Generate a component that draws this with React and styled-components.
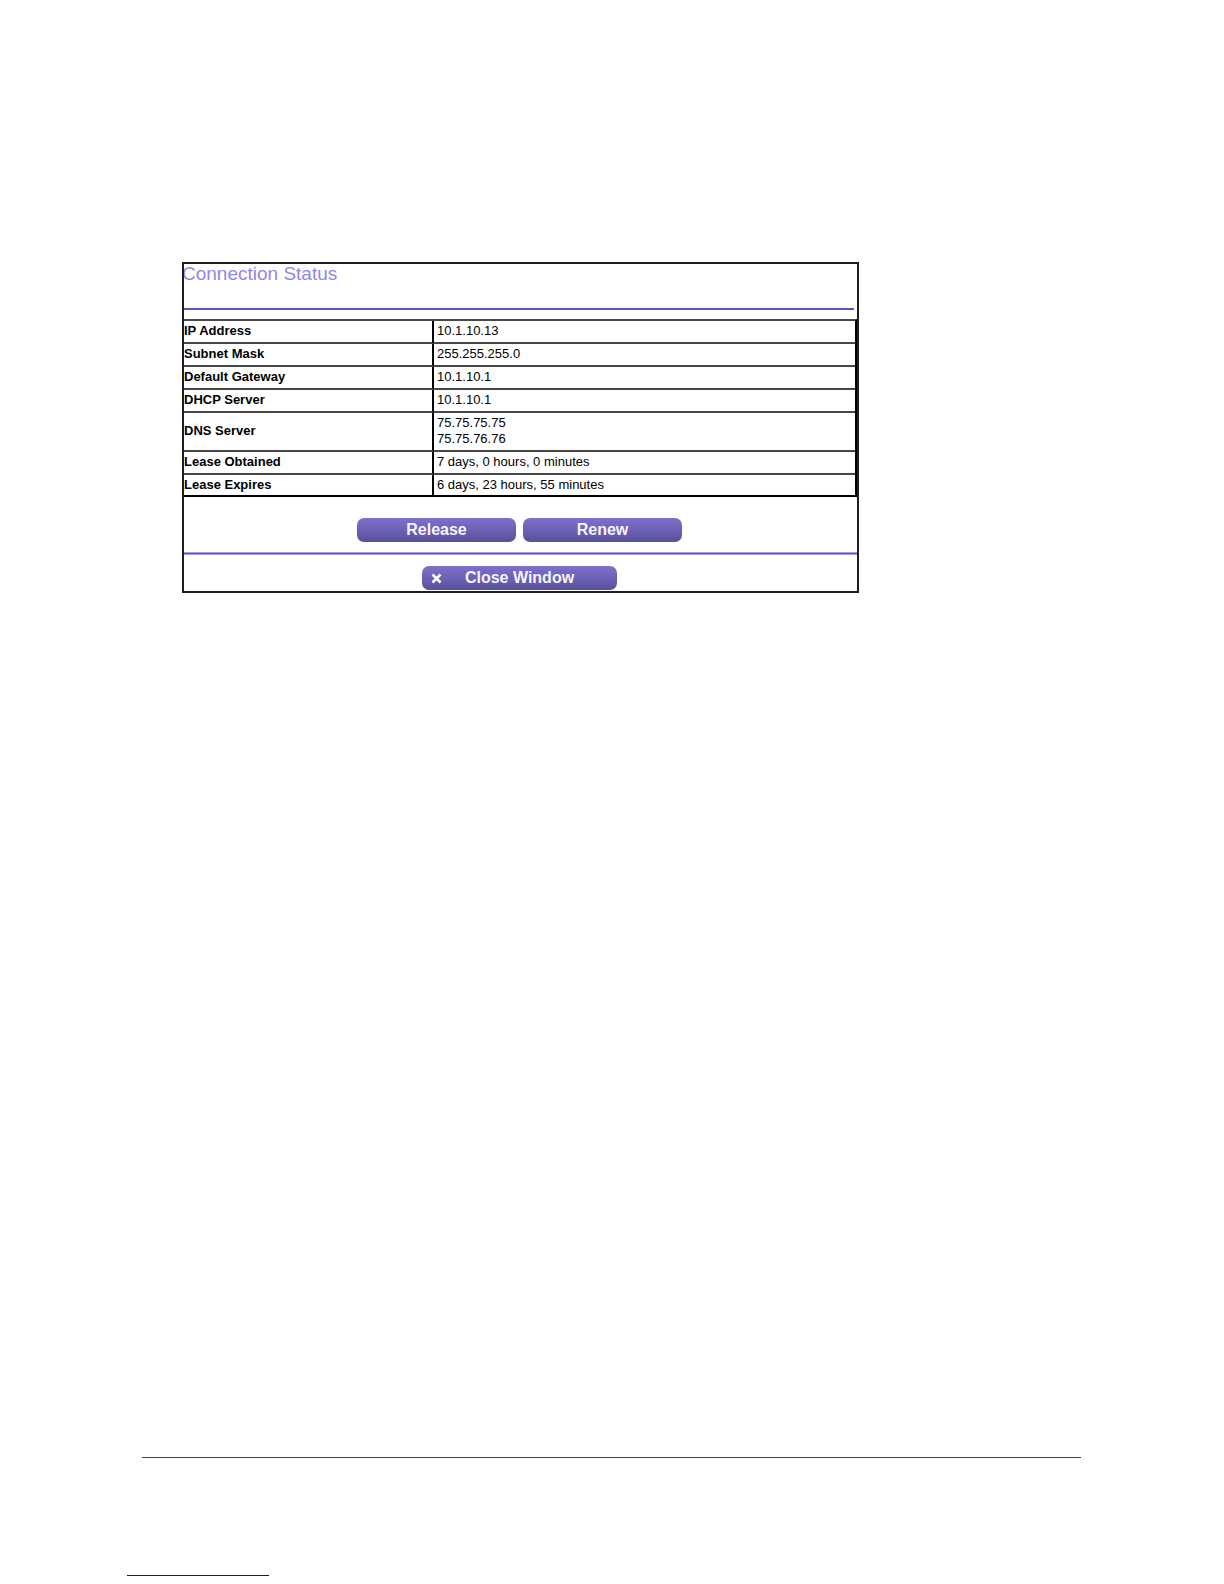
import React from 'react';
import styled, { createGlobalStyle } from 'styled-components';

const palette = {
    ink: '#000000',
    frame: '#1f1d20',
    line: '#484848',
    title: '#9385ea',
    purple: '#5f4fc0',
    lilac: '#a99fe6',
    footer: '#50327a',
    link: '#19127c',
}

const GlobalStyle = createGlobalStyle`
    *{
        box-sizing: border-box;
    }
    body{
        margin: 0;
        background: #ffffff;
        color: ${palette.ink};
        font-family: "Liberation Sans", Arial, sans-serif;
        font-size: 13px;
        line-height: 16px;
    }
`

const Page = styled.div`
    display: flex;
    flex-direction: column;
    min-height: 100vh;
    padding: 262px 143px 8px 127px;
`

const Main = styled.main`
    flex: 1;
    padding-left: 55px;
`

const Frame = styled.section`
    max-width: 677px;
    border: 2px solid ${palette.frame};
    overflow: hidden;
`

const Title = styled.h1`
    margin: 0 0 0 -2px;
    color: ${palette.title};
    font-size: 19px;
    font-weight: normal;
    line-height: 20px;
`

const TitleRule = styled.hr`
    height: 2px;
    margin: 24px 3px 9px 0;
    border: none;
    background: ${palette.purple};
`

const StatusTable = styled.table`
    width: 100%;
    border-collapse: separate;
    border-spacing: 0;
    border-top: 2px solid ${palette.line};
    border-right: 2px solid ${palette.ink};

    th, td{
        border-bottom: 2px solid ${palette.line};
        text-align: left;
        vertical-align: middle;
    }
    th{
        width: 250px;
        padding: 2px 0 3px;
        border-right: 2px solid ${palette.ink};
    }
    td{
        padding: 2px 0 3px 3px;
    }
    tr:last-child th, tr:last-child td{
        padding-bottom: 2px;
        border-bottom-color: ${palette.ink};
    }
`

const Line = styled.div``

const Actions = styled.div`
    display: flex;
    justify-content: center;
    gap: 7px;
    padding: ${(props) => props.$footer ? '11px 2px 1px 0' : '21px 2px 10px 0'};
`

const ButtonStyle = styled.button`
    position: relative;
    width: ${(props) => props.$wide ? '195px' : '159px'};
    height: 24px;
    padding: 0;
    border: none;
    border-radius: 7px;
    background: linear-gradient(#7d71cb, #6c61b3 50%, #57509a);
    color: #f6f4ff;
    font-family: inherit;
    font-size: 16px;
    font-weight: bold;
    line-height: 24px;
    cursor: pointer;
`

const CloseIcon = styled.svg`
    position: absolute;
    left: 9px;
    top: 7px;
    width: 11px;
    height: 11px;
    stroke: #ffffff;
    stroke-width: 2.6;
`

const Divider = styled.hr`
    height: 3px;
    margin: 0;
    border: solid ${palette.lilac};
    border-width: 1px 0;
    background: ${palette.purple};
`

const PageFooter = styled.footer`
    hr{
        height: 1px;
        margin: 0;
        border: none;
    }
`

const FooterRule = styled.hr`
    background: ${palette.footer};
    && {
        margin: 0 0 117px 15px;
    }
`

const LinkRule = styled.hr`
    width: 142px;
    background: ${palette.link};
`

const rows = [
    { label: 'IP Address', values: ['10.1.10.13'] },
    { label: 'Subnet Mask', values: ['255.255.255.0'] },
    { label: 'Default Gateway', values: ['10.1.10.1'] },
    { label: 'DHCP Server', values: ['10.1.10.1'] },
    { label: 'DNS Server', values: ['75.75.75.75', '75.75.76.76'] },
    { label: 'Lease Obtained', values: ['7 days, 0 hours, 0 minutes'] },
    { label: 'Lease Expires', values: ['6 days, 23 hours, 55 minutes'] },
]

const App = () => {
    return (
        <>
            <GlobalStyle />
            <Page>
                <Main>
                    <Frame>
                        <Title>Connection Status</Title>
                        <TitleRule />
                        <StatusTable>
                            <tbody>
                                {rows.map(({ label, values }) => (
                                    <tr key={label}>
                                        <th scope="row">{label}</th>
                                        <td>{values.map((value) => <Line key={value}>{value}</Line>)}</td>
                                    </tr>
                                ))}
                            </tbody>
                        </StatusTable>
                        <Actions>
                            <ButtonStyle type="button">Release</ButtonStyle>
                            <ButtonStyle type="button">Renew</ButtonStyle>
                        </Actions>
                        <Divider />
                        <Actions $footer>
                            <ButtonStyle type="button" $wide>
                                <CloseIcon viewBox="0 0 11 11" aria-hidden="true">
                                    <path d="M1.5 1.5L9.5 9.5M9.5 1.5L1.5 9.5" />
                                </CloseIcon>
                                Close Window
                            </ButtonStyle>
                        </Actions>
                    </Frame>
                </Main>
                <PageFooter>
                    <FooterRule />
                    <LinkRule />
                </PageFooter>
            </Page>
        </>
    );
};

export default App;
